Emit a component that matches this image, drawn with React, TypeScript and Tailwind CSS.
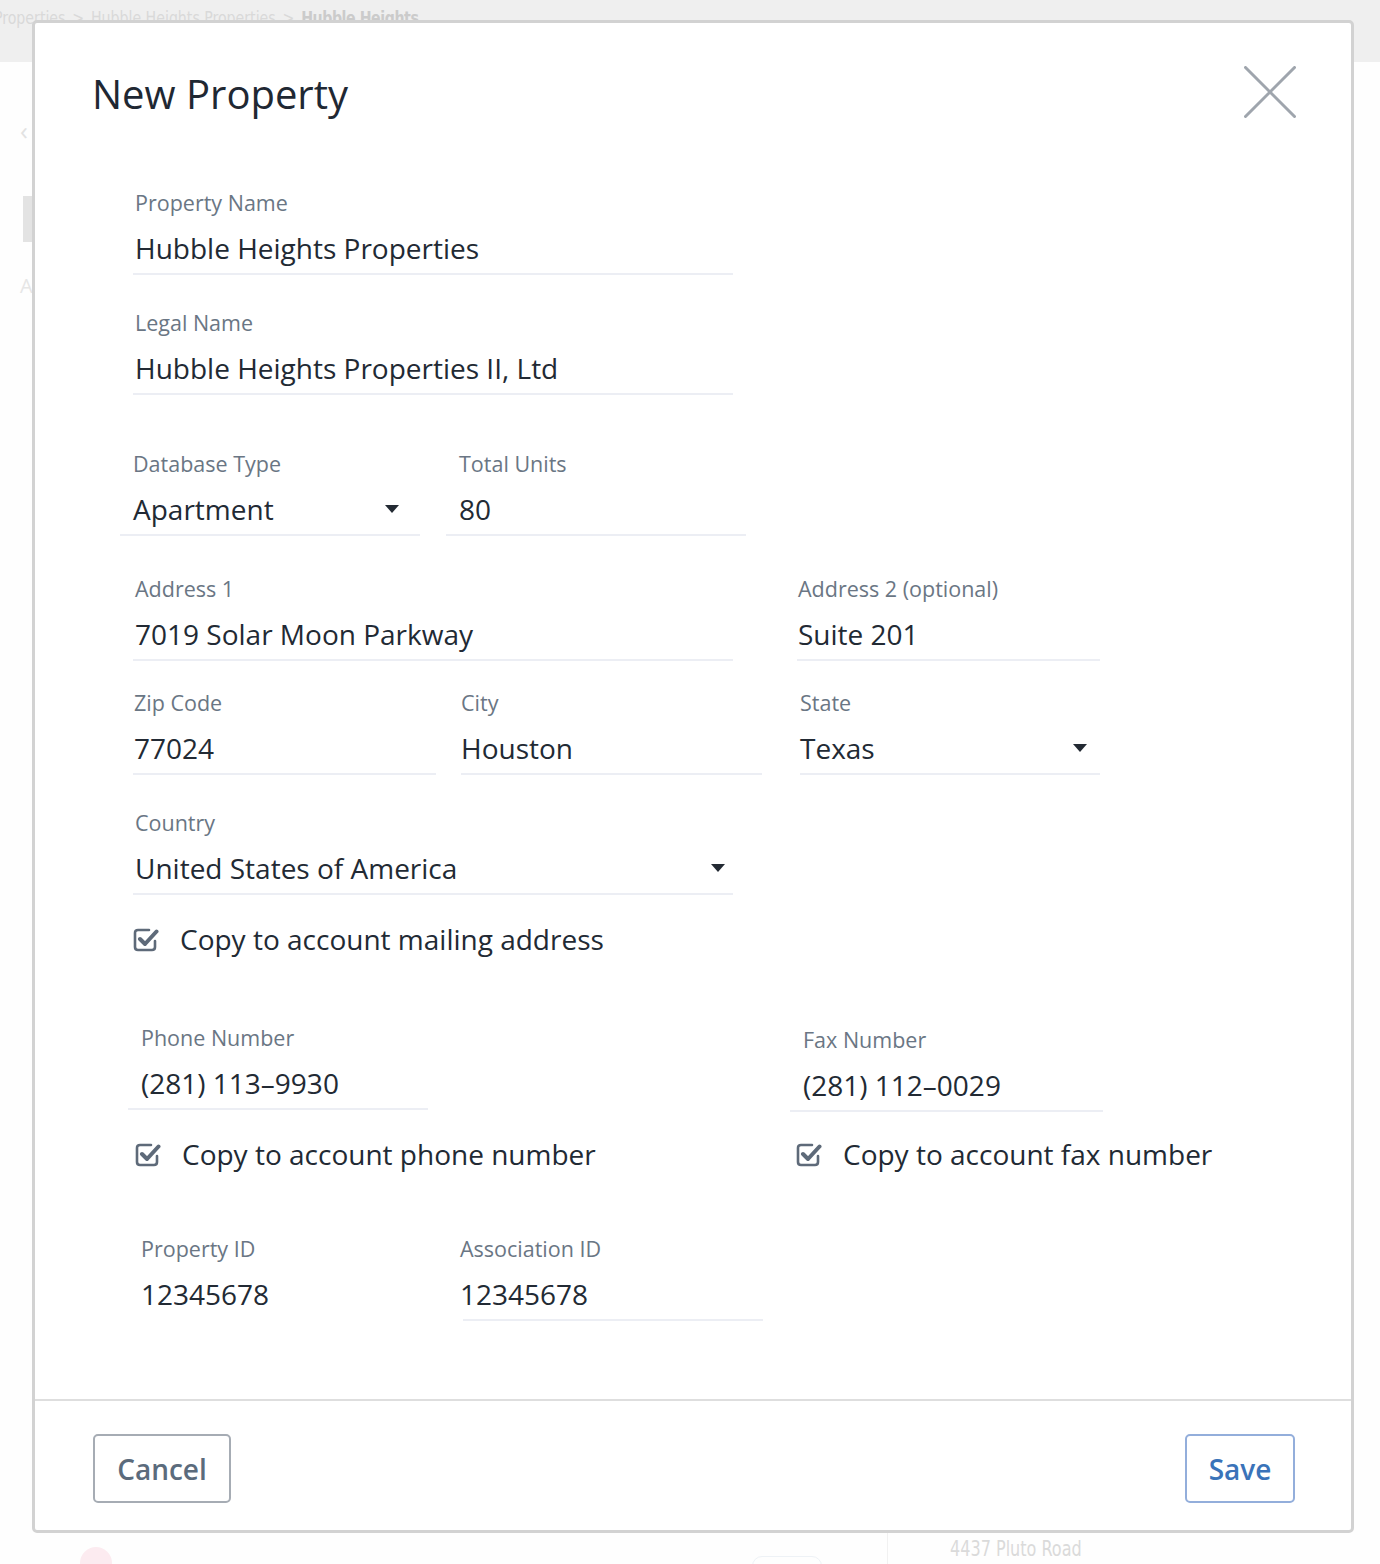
import { ReactNode } from 'react'

const font = { fontFamily: '"Open Sans", "Noto Sans", Arial, sans-serif' }
const condensed = {
  fontFamily: '"DejaVu Sans Condensed", "Liberation Sans Narrow", Roboto, sans-serif',
  transform: 'scaleX(0.85)',
  transformOrigin: 'left',
}

interface FieldProps {
  label: string
  value: string
  className?: string
  inset?: string
  select?: boolean
  underline?: boolean
}

function Caret() {
  return (
    <svg width="14" height="8" viewBox="0 0 14 8" className="shrink-0">
      <path d="M0 0 L14 0 L7 8 Z" fill="#232a33" />
    </svg>
  )
}

// Champ de formulaire : libellé + valeur soulignée
function Field({ label, value, className = '', inset = '', select = false, underline = true }: FieldProps) {
  return (
    <div className={className}>
      <div className={`h-[30px] leading-[30px] text-[21.5px] text-[#6a7684] whitespace-nowrap ${inset}`}>{label}</div>
      <div className={`mt-[10px] h-[47px] ${underline ? 'border-b-2 border-[#eceef4]' : ''}`}>
        <div className={`flex items-start justify-between text-[28px] leading-[40px] text-[#222a34] whitespace-nowrap ${inset}`}>
          <span>{value}</span>
          {select && (
            <span className="h-[40px] flex items-center">
              <Caret />
            </span>
          )}
        </div>
      </div>
    </div>
  )
}

function CheckIcon() {
  return (
    <svg width="26" height="26" viewBox="0 0 26 26" className="shrink-0">
      <path
        d="M16 4 H5 Q2 4 2 7 V21 Q2 24 5 24 H19 Q22 24 22 21 V15"
        fill="none"
        stroke="#5e6a79"
        strokeWidth="2.6"
        strokeLinecap="round"
      />
      <path
        d="M7 13 L12 18 L23.5 5.5"
        fill="none"
        stroke="#5e6a79"
        strokeWidth="4"
        strokeLinecap="round"
        strokeLinejoin="round"
      />
    </svg>
  )
}

function Checkbox({ children }: { children: ReactNode }) {
  return (
    <div className="h-[40px] flex items-center gap-[21px] text-[28px] text-[#222a34] whitespace-nowrap">
      <CheckIcon />
      <span className="leading-[40px]">{children}</span>
    </div>
  )
}

export default function App() {
  return (
    <div className="relative w-[1380px] h-[1564px] overflow-hidden bg-[#fefefe]" style={font}>
      {/* Página de fundo (esmaecida) */}
      <div className="h-full flex flex-col">
        <div className="h-[62px] bg-[#efefef] flex items-start">
          <div
            className="-ml-[6px] mt-[4px] text-[18.5px] leading-[28px] text-[#d9d9d9] whitespace-nowrap flex gap-[8px]"
            style={condensed}
          >
            <span>Properties</span>
            <span>&gt;</span>
            <span>Hubble Heights Properties</span>
            <span>&gt;</span>
            <span className="font-bold text-[#cbcbcb] tracking-[-0.5px]">Hubble Heights</span>
          </div>
        </div>
        <div className="pl-[20px] flex flex-col">
          <div className="mt-[54px] text-[26px] leading-[28px] text-[#e2e2e2]">‹</div>
          <div className="mt-[52px] ml-[3px] w-[11px] h-[46px] bg-[#e3e3e3]" />
          <div className="mt-[32px] text-[20px] leading-[24px] text-[#e6e6e6]">A</div>
        </div>
        <div className="mt-auto h-[31px] flex items-start">
          <div className="ml-[80px] mt-[14px] w-[32px] h-[32px] rounded-full bg-[#fcebf0]" />
          <div className="ml-[640px] mt-[23px] w-[70px] h-[20px] rounded-t-[10px] border border-[#eef2f6]" />
          <div className="ml-[65px] w-px h-full bg-[#f1f1f1]" />
          <div className="ml-[62px] mt-[3px] text-[21px] leading-[26px] text-[#dadada] whitespace-nowrap" style={condensed}>
            4437 Pluto Road
          </div>
        </div>
      </div>

      {/* Modal */}
      <div className="absolute left-[32px] top-[20px] w-[1322px] h-[1513px] bg-white border-[3px] border-[#d2d2d2] rounded-[5px] flex flex-col">
        <div className="h-[1376px]">
          <div className="flex items-start justify-between pl-[57px] pr-[55px]">
            <h1 className="mt-[47px] text-[40px] leading-[48px] text-[#1f2833]">New Property</h1>
            <svg width="52" height="52" viewBox="0 0 52 52" className="mt-[43px]">
              <path d="M1.5 1.5 L50.5 50.5 M50.5 1.5 L1.5 50.5" stroke="#9fa5ad" strokeWidth="3" strokeLinecap="round" />
            </svg>
          </div>

          <Field className="mt-[70px] ml-[98px] w-[600px]" inset="pl-[2px]" label="Property Name" value="Hubble Heights Properties" />
          <Field className="mt-[33px] ml-[98px] w-[600px]" inset="pl-[2px]" label="Legal Name" value="Hubble Heights Properties II, Ltd" />

          <div className="mt-[54px] flex">
            <Field className="ml-[85px] w-[300px]" inset="pl-[13px] pr-[21px]" label="Database Type" value="Apartment" select />
            <Field className="ml-[26px] w-[300px]" inset="pl-[13px]" label="Total Units" value="80" />
          </div>

          <div className="mt-[38px] flex">
            <Field className="ml-[98px] w-[600px]" inset="pl-[2px]" label="Address 1" value="7019 Solar Moon Parkway" />
            <Field className="ml-[64px] w-[303px]" inset="pl-[1px]" label="Address 2 (optional)" value="Suite 201" />
          </div>

          <div className="mt-[27px] flex">
            <Field className="ml-[98px] w-[303px]" inset="pl-[1px]" label="Zip Code" value="77024" />
            <Field className="ml-[25px] w-[301px]" label="City" value="Houston" />
            <Field className="ml-[38px] w-[300px]" inset="pr-[13px]" label="State" value="Texas" select />
          </div>

          <Field className="mt-[33px] ml-[98px] w-[600px]" inset="pl-[2px] pr-[8px]" label="Country" value="United States of America" select />

          <div className="mt-[24px] ml-[98px]">
            <Checkbox>Copy to account mailing address</Checkbox>
          </div>

          <div className="mt-[64px] flex items-start">
            <Field className="ml-[93px] w-[300px]" inset="pl-[13px]" label="Phone Number" value="(281) 113–9930" />
            <Field className="mt-[2px] ml-[362px] w-[313px]" inset="pl-[13px]" label="Fax Number" value="(281) 112–0029" />
          </div>

          <div className="mt-[22px] flex">
            <div className="ml-[100px] w-[661px]">
              <Checkbox>Copy to account phone number</Checkbox>
            </div>
            <Checkbox>Copy to account fax number</Checkbox>
          </div>

          <div className="mt-[60px] flex">
            <Field className="ml-[93px] w-[300px]" inset="pl-[13px]" label="Property ID" value="12345678" underline={false} />
            <Field className="ml-[35px] w-[300px]" inset="-ml-[3px]" label="Association ID" value="12345678" />
          </div>
        </div>

        <div className="flex-1 border-t-2 border-[#dedede] pt-[33px] pl-[58px] pr-[56px] flex items-start justify-between">
          <button className="w-[138px] h-[69px] border-2 border-[#a6acb4] rounded-[5px] text-[28px] font-semibold text-[#5b6b7c] leading-none">
            Cancel
          </button>
          <button className="w-[110px] h-[69px] border-2 border-[#93aedb] rounded-[5px] text-[28px] font-semibold text-[#3a73b9] leading-none">
            Save
          </button>
        </div>
      </div>
    </div>
  )
}
